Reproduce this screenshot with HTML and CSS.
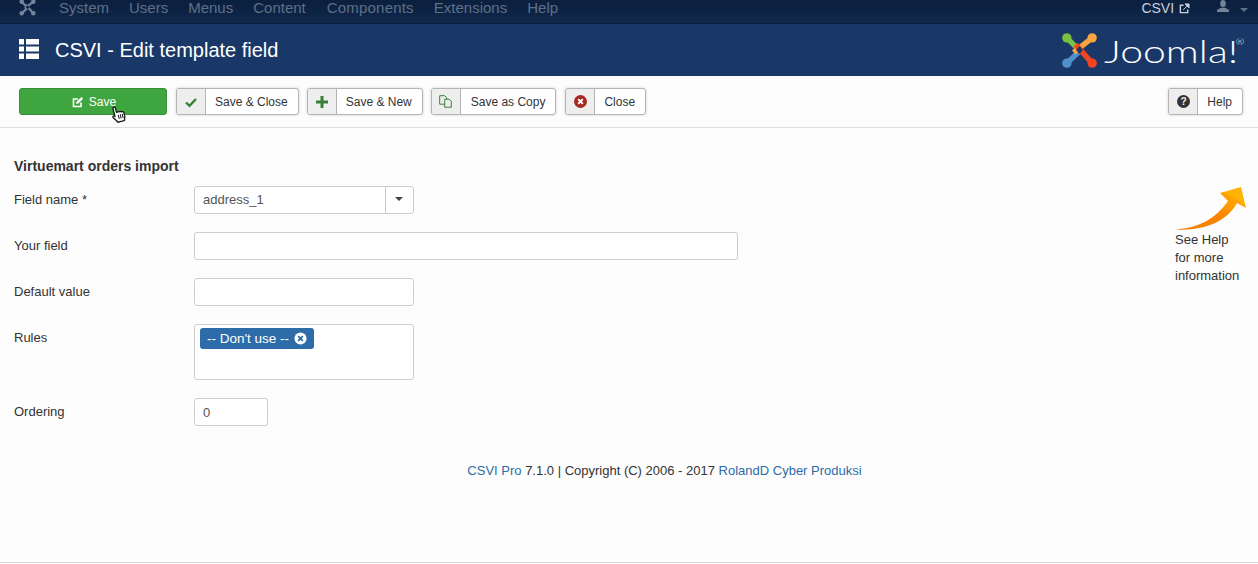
FILE: index.html
```html
<!DOCTYPE html>
<html lang="en">
<head>
  <meta charset="UTF-8" />
  <title>CSVI - Edit template field</title>
  <link rel="stylesheet" href="styles.css">
</head>
<body>
  <nav class="topbar">
    <svg class="top-logo" viewBox="0 0 38 38" width="17" height="17">
      <g fill="none" stroke="#76849a" stroke-width="5">
        <path d="M6 32L22 17M6 6L21 21M32 6L13 21M32 32L15 13"/>
      </g>
      <g fill="#76849a"><circle cx="6" cy="6" r="5"/><circle cx="32" cy="6" r="5"/><circle cx="6" cy="32" r="5"/><circle cx="32" cy="32" r="5"/></g>
      <path d="M19 14l4 4.500-4 4.500-4-4.500z" fill="#0e2344"/>
    </svg>
    <ul class="menu">
      <li>System</li>
      <li>Users</li>
      <li>Menus</li>
      <li>Content</li>
      <li class="menu-long">Components</li>
      <li>Extensions</li>
      <li>Help</li>
    </ul>
    <div class="top-right">
      <span class="site-link">CSVI
        <svg viewBox="0 0 12 12" width="11" height="11"><path d="M5 2.500H1.500v8h8V7" fill="none" stroke="#c8d0dc" stroke-width="1.500"/><path d="M4.500 7.500L10 2M6.500 1h4.500v4.500z" fill="#c8d0dc" stroke="#c8d0dc" stroke-width="1"/></svg>
      </span>
      <svg class="user-icon" viewBox="0 0 12 12" width="12" height="12"><ellipse cx="6" cy="3.500" rx="2.800" ry="3.500" fill="#76849a"/><path d="M0 12V10l4-2.200h4L12 10v2z" fill="#76849a"/></svg>
      <span class="caret-top"></span>
    </div>
  </nav>

  <header class="titlebar">
    <svg class="title-icon" viewBox="0 0 20 20" width="20" height="20" fill="#fff">
      <path d="M0 0h5v5.500H0zM7 0h13v5.500H7zM0 7.500h5v5H0zM7 7.500h13v5H7zM0 14.500h5V20H0zM7 14.500h13V20H7z"/>
    </svg>
    <h1>CSVI - Edit template field</h1>
    <div class="brand">
      <svg viewBox="0 0 38 38" width="37" height="37">
        <g fill="none" stroke-width="5.500">
          <path d="M6 32L22 17" stroke="#5091cd"/>
          <path d="M6 6L21 21" stroke="#7ac143"/>
          <path d="M32 6L13 21" stroke="#f9a541"/>
          <path d="M32 32L15 13" stroke="#f44321"/>
        </g>
        <circle cx="6" cy="6" r="4.800" fill="#7ac143"/>
        <circle cx="32" cy="6" r="4.800" fill="#f9a541"/>
        <circle cx="32" cy="32" r="4.800" fill="#f44321"/>
        <circle cx="6" cy="32" r="4.800" fill="#5091cd"/>
        <path d="M19 14.500l3.500 4-3.500 4-3.500-4z" fill="#1a3867"/>
      </svg>
      <span class="brand-name">Joomla!<sup>®</sup></span>
    </div>
  </header>

  <div class="toolbar">
    <button class="btn-save">
      <svg viewBox="0 0 12 12" width="12" height="12"><path d="M9 6.500V10.500H1.500V3H6" fill="none" stroke="#fff" stroke-width="1.600"/><path d="M4.500 5.800L9.500 1l1.700 1.700L6.300 7.500l-2.100.4z" fill="#fff"/></svg>
      Save
    </button>
    <button class="btn"><span class="btn-icon">
      <svg viewBox="0 0 12 12" width="12" height="12"><path d="M1 6.500l3.500 3.300L11 3" fill="none" stroke="#378137" stroke-width="2.400"/></svg>
    </span><span class="btn-label">Save &amp; Close</span></button>
    <button class="btn"><span class="btn-icon">
      <svg viewBox="0 0 12 12" width="12" height="12"><path d="M6 0v12M0 6h12" stroke="#378137" stroke-width="3"/></svg>
    </span><span class="btn-label">Save &amp; New</span></button>
    <button class="btn btn-copy"><span class="btn-icon">
      <svg viewBox="0 0 13 13" width="13" height="13"><path d="M.7.700h5l2 2v6.500h-7z" fill="none" stroke="#378137"/><path d="M5.700 4.200h4.600l2 2v6h-6.600z" fill="#eee" stroke="#378137"/></svg>
    </span><span class="btn-label">Save as Copy</span></button>
    <button class="btn"><span class="btn-icon">
      <svg viewBox="0 0 14 14" width="13" height="13"><circle cx="7" cy="7" r="7" fill="#a52a22"/><path d="M4.500 4.500l5 5M9.500 4.500l-5 5" stroke="#fff" stroke-width="2"/></svg>
    </span><span class="btn-label">Close</span></button>
    <button class="btn btn-help"><span class="btn-icon">
      <svg viewBox="0 0 14 14" width="13" height="13"><circle cx="7" cy="7" r="7" fill="#333"/><text x="7" y="11" class="help-q">?</text></svg>
    </span><span class="btn-label">Help</span></button>
  </div>

  <main class="content">
    <div class="form-area">
      <h2>Virtuemart orders import</h2>
      <div class="row">
        <label>Field name *</label>
        <div class="select"><span class="select-value">address_1</span><span class="select-arrow"></span></div>
      </div>
      <div class="row">
        <label>Your field</label>
        <input class="input input-wide" type="text" />
      </div>
      <div class="row">
        <label>Default value</label>
        <input class="input input-mid" type="text" />
      </div>
      <div class="row">
        <label>Rules</label>
        <div class="tag-box">
          <span class="tag">-- Don't use --
            <svg viewBox="0 0 14 14" width="13" height="13"><circle cx="7" cy="7" r="6.500" fill="#fff"/><path d="M4.500 4.500l5 5M9.500 4.500l-5 5" stroke="#2d6ca8" stroke-width="2"/></svg>
          </span>
        </div>
      </div>
      <div class="row">
        <label>Ordering</label>
        <input class="input input-small" type="text" value="0" />
      </div>
    </div>
    <aside class="help-note">
      <svg viewBox="0 0 72 44" width="72" height="44">
        <defs>
          <linearGradient id="arrowFill" x1="0" y1="1" x2="1" y2="0">
            <stop offset="0" stop-color="#f57c00"/>
            <stop offset=".5" stop-color="#f98600"/>
            <stop offset=".62" stop-color="#ff9800"/>
            <stop offset=".76" stop-color="#ffa000"/>
            <stop offset=".8" stop-color="#ffb300"/>
            <stop offset="1" stop-color="#ffb300"/>
          </linearGradient>
        </defs>
        <path d="M0 43.500C22 42 40 33 52 15L44 7 65 1 70 22 61 17C50 37 26 45 0 43.500z" fill="url(#arrowFill)"/>
      </svg>
      <p>See Help<br>for more<br>information</p>
    </aside>
  </main>

  <footer class="copyright">
    <a>CSVI Pro</a> 7.1.0 | Copyright (C) 2006 - 2017 <a>RolandD Cyber Produksi</a>
  </footer>
  <div class="bottom-line"></div>

  <!-- hand cursor from the recording -->
  <svg class="cursor" viewBox="0 0 14 18" width="14" height="18">
    <path d="M4 1.500c1-.8 2-.3 2 1V7l1 0c1-.5 1.500 0 2 .3 1-.4 1.500 0 2 .5 1-.2 2 .4 2 1.500V13l-1.500 4H5L1.500 11.500c-.8-1.500.5-2.500 2-1.300V2z" fill="#fff" stroke="#111" stroke-width="1.300"/>
    <path d="M7 10v4M9 10v4M11 10v4" stroke="#111" stroke-width="1"/>
  </svg>
</body>
</html>
```

FILE: styles.css
```css
* {
  box-sizing: border-box;
}
body {
  margin: 0;
  height: 564px;
  overflow: hidden;
  background: #fdfdfd;
  font-family: "Liberation Sans", Arial, sans-serif;
  font-size: 13px;
  color: #333;
  display: flex;
  flex-direction: column;
  position: relative;
}
.topbar {
  height: 24px;
  flex: none;
  display: flex;
  align-items: center;
  padding: 0 10px 0 19px;
  background: linear-gradient(#0b1f3e, #10284d);
  border-bottom: 1px solid #0c1f3c;
}
.top-logo {
  flex: none;
  margin-top: -8px;
}
.menu {
  list-style: none;
  margin: 0 0 0 23px;
  padding: 0;
  display: flex;
  gap: 20px;
  font-size: 15px;
  color: #5f6f86;
  position: relative;
  top: -4px;
}
.menu-long {
  letter-spacing: .2px;
  margin-left: 1px;
}
.top-right {
  margin-left: auto;
  display: flex;
  align-items: center;
  color: #c8d0dc;
  font-size: 14px;
  position: relative;
  top: -4px;
}
.site-link svg {
  margin-left: 1px;
  vertical-align: -1px;
}
.user-icon {
  margin-left: 27px;
  margin-top: -4px;
}
.caret-top {
  margin-left: 11px;
  margin-top: 4px;
  border: 4px solid transparent;
  border-top-color: #5f6f86;
  border-bottom: 0;
}
.titlebar {
  height: 52px;
  flex: none;
  display: flex;
  align-items: center;
  padding: 0 16px 0 19px;
  background: #1a3867;
  color: #fff;
}
.title-icon {
  margin-top: -3px;
}
.titlebar h1 {
  margin: 0 0 0 16px;
  font-size: 20px;
  font-weight: normal;
  line-height: 52px;
}
.brand {
  margin-left: auto;
  display: flex;
  align-items: center;
  gap: 6px;
}
.brand-name {
  display: block;
  width: 138px;
  font-family: "Lato", sans-serif;
  font-weight: 300;
  font-size: 32px;
  white-space: nowrap;
  transform: scaleX(1.28);
  transform-origin: left;
  position: relative;
}
.brand-name sup {
  font-size: 8px;
  position: absolute;
  top: 6px;
  left: 103px;
}
.toolbar {
  height: 52px;
  flex: none;
  display: flex;
  align-items: center;
  gap: 8px;
  padding: 0 15px 0 19px;
  border-bottom: 1px solid #ddd;
}
.toolbar button {
  font: inherit;
  font-size: 12px;
  color: #333;
  height: 27px;
  padding: 0;
  border-radius: 3px;
  cursor: pointer;
}
.toolbar .btn-save {
  width: 148px;
  margin-right: 1px;
  padding: 0 0 0 2px;
  background: #3fa63f;
  border: 1px solid #378f37;
  color: #fff;
  display: flex;
  align-items: center;
  justify-content: center;
  gap: 5px;
}
.btn {
  display: flex;
  align-items: stretch;
  background: #fff;
  border: 1px solid #b4b4b4;
  box-shadow: 0 0 3px rgba(0,0,0,.18);
}
.btn-icon {
  width: 29px;
  display: flex;
  align-items: center;
  justify-content: center;
  background: #eee;
  border-right: 1px solid #b4b4b4;
  border-radius: 2px 0 0 2px;
}
.btn-label {
  padding: 1px 10px 0 9px;
  line-height: 25px;
}
.btn-copy {
  margin-right: 1px;
}
.btn-copy .btn-label {
  padding-left: 10px;
}
.btn-help {
  margin-left: auto;
}
.help-q {
  font-family: "Liberation Sans", sans-serif;
  font-size: 11px;
  font-weight: bold;
  fill: #eee;
  text-anchor: middle;
}
.content {
  flex: none;
  height: 306px;
  display: flex;
  justify-content: space-between;
}
.form-area {
  padding: 29px 0 0 14px;
}
.form-area h2 {
  margin: 0 0 11px;
  font-size: 14px;
  line-height: 18px;
  font-weight: bold;
}
.row {
  display: flex;
  align-items: flex-start;
  margin-bottom: 18px;
}
.row label {
  width: 180px;
  flex: none;
  line-height: 27px;
}
.input, .select, .tag-box {
  border: 1px solid #ccc;
  border-radius: 3px;
  background: #fff;
  font: inherit;
  color: #555;
}
.input {
  height: 28px;
  padding: 0 8px;
  outline: 0;
}
.input-wide {
  width: 544px;
}
.input-mid {
  width: 220px;
}
.input-small {
  width: 74px;
}
.select {
  width: 220px;
  height: 28px;
  display: flex;
}
.select-value {
  flex: 1;
  padding-left: 8px;
  line-height: 25px;
}
.select-arrow {
  width: 28px;
  border-left: 1px solid #ccc;
  position: relative;
}
.select-arrow::after {
  content: "";
  position: absolute;
  left: 9px;
  top: 10px;
  border: 4px solid transparent;
  border-top-color: #444;
  border-bottom: 0;
}
.tag-box {
  width: 220px;
  height: 56px;
  padding: 3px 5px;
}
.tag {
  display: inline-flex;
  align-items: center;
  height: 21px;
  padding: 0 7px;
  gap: 5px;
  border-radius: 3px;
  background: #2d6ca8;
  color: #fff;
  font-size: 13.500px;
  white-space: nowrap;
}
.help-note {
  padding: 58px 12px 0 0;
  width: 83px;
  flex: none;
}
.help-note svg {
  display: block;
  margin-left: 1px;
}
.help-note p {
  margin: 1px 0 0;
  line-height: 18px;
}
.copyright {
  text-align: center;
  line-height: 18px;
  margin-left: 71px;
  margin-top: 28px;
}
.copyright a {
  color: #2d6ca8;
}
.bottom-line {
  margin-top: auto;
  height: 2px;
  background: #fff;
  border-top: 1px solid #d4d4d4;
}
.cursor {
  position: absolute;
  left: 111px;
  top: 105px;
  transform: rotate(-15deg);
}
```
